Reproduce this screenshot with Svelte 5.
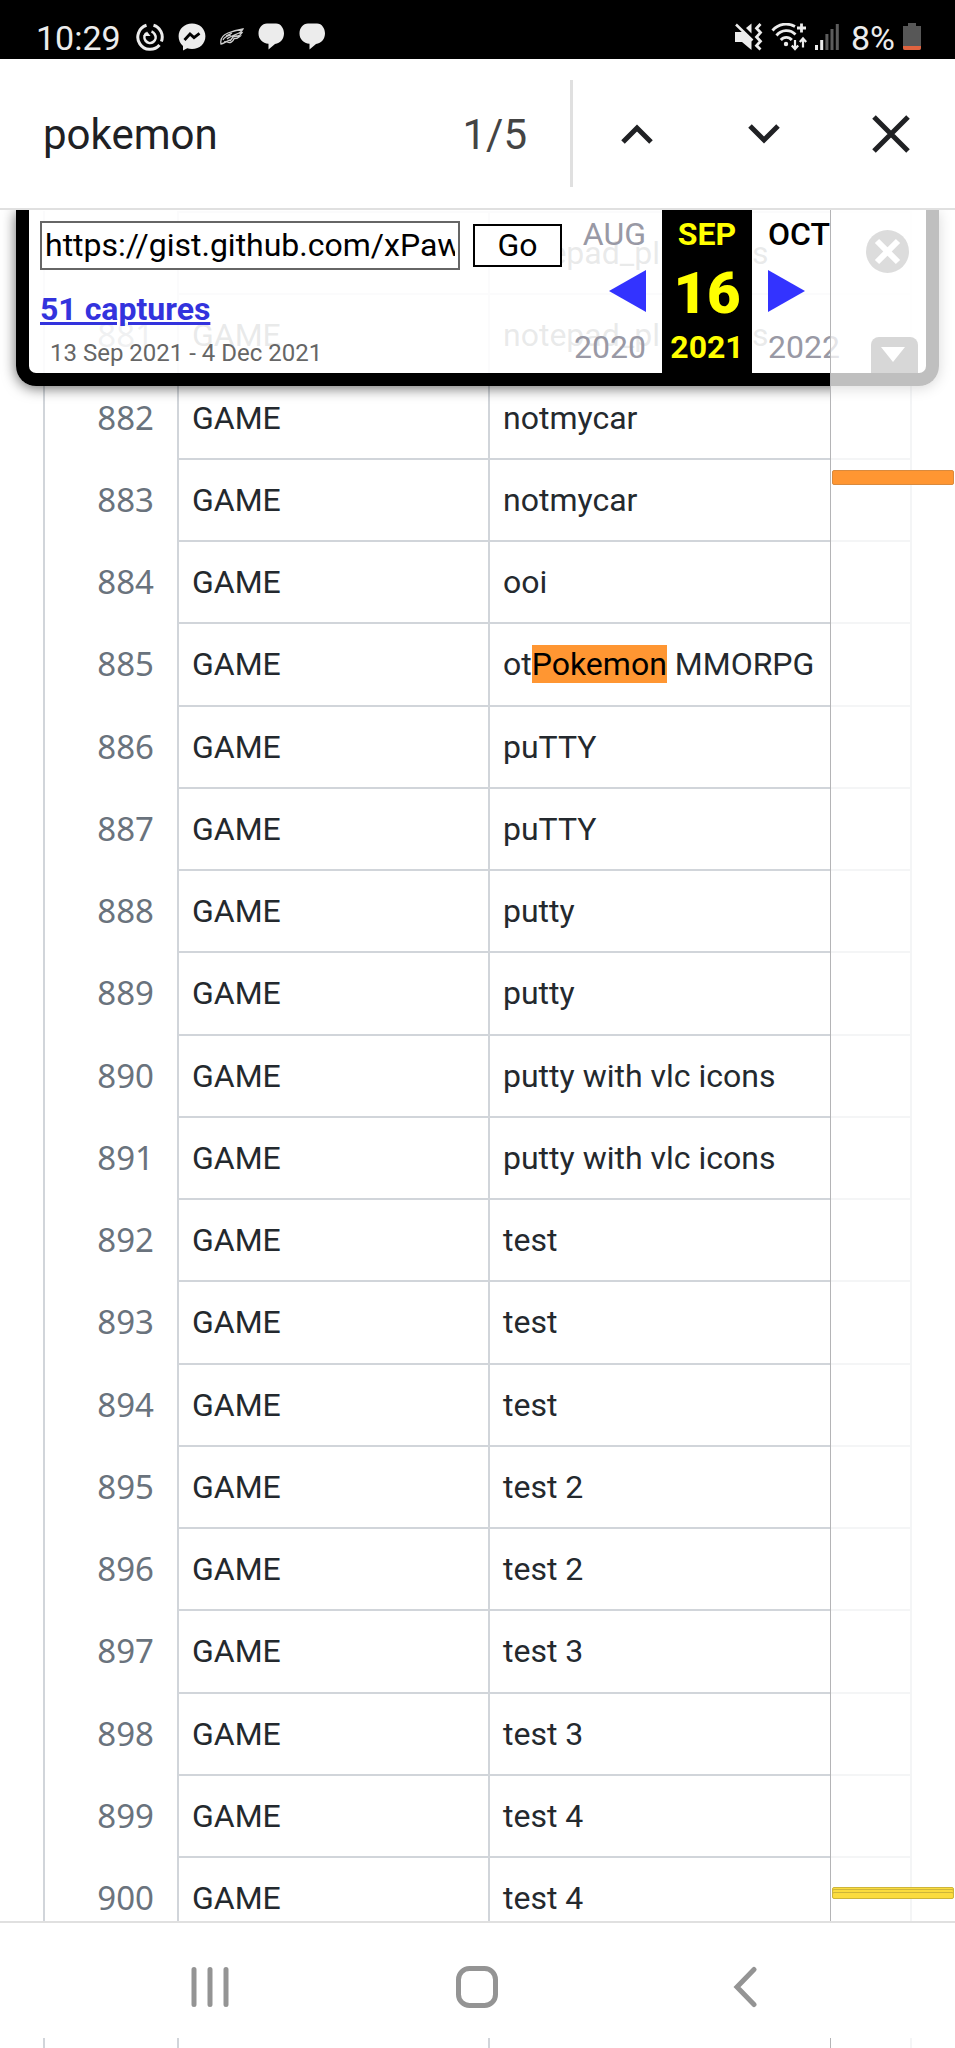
<script>
	let query = 'pokemon';
	let archiveUrl = 'https://gist.github.com/xPaw';
	let total = 5;
	let current = 1;

	const names = [
		'notepad_plus_plus',
		'notepad_plus_plus',
		'notmycar',
		'notmycar',
		'ooi',
		'otPokemon MMORPG',
		'puTTY',
		'puTTY',
		'putty',
		'putty',
		'putty with vlc icons',
		'putty with vlc icons',
		'test',
		'test',
		'test',
		'test 2',
		'test 2',
		'test 3',
		'test 3',
		'test 4',
		'test 4'
	];

	const rows = names.map((name, i) => ({ line: 880 + i, type: 'GAME', name }));

	// position of every match in the scrollbar strip
	const marks = [
		{ top: 260, height: 15, active: true },
		{ top: 1677, height: 8 },
		{ top: 1679, height: 8 },
		{ top: 1682, height: 7 }
	];

	// split a cell around the searched word
	function split(text, word) {
		const at = word ? text.toLowerCase().indexOf(word.toLowerCase()) : -1;
		if (at < 0) return [text, '', ''];
		return [text.slice(0, at), text.slice(at, at + word.length), text.slice(at + word.length)];
	}

	function previous() {
		current = current > 1 ? current - 1 : total;
	}

	function next() {
		current = current < total ? current + 1 : 1;
	}
</script>

<div class="screen">
	<header class="status">
		<time>10:29</time>
		<div class="notifications">
			<svg width="28" height="28" viewBox="0 0 28 28" fill="none" stroke="#ececec">
				<path d="M10.5 2.3A12.3 12.3 0 1 0 23.5 22M17.5 2.3A12.3 12.3 0 0 1 25.4 18.5" stroke-width="3" />
				<path d="M10.3 10.2A5.6 5.6 0 1 0 18.7 11.3A5.6 5.6 0 0 0 15.5 8.4" stroke-width="2.6" />
				<path d="M7 13l4-4.5 3.5 4.5z" fill="#ececec" stroke="none" />
			</svg>
			<svg width="28" height="28" viewBox="0 0 28 28">
				<path d="M14 .5C6.300.5.6 6 .6 13.300c0 4 1.600 7.300 4.400 9.600V27.500l4.200-2.200c1.500.4 3.100.7 4.800.7 7.700 0 13.400-5.500 13.400-12.800S21.700.5 14 .5z" fill="#ececec" />
				<path d="M6.500 17l5.500-6 4 3.600 5.500-4.200" fill="none" stroke="#000" stroke-width="2.800" />
			</svg>
			<svg width="24" height="18" viewBox="0 0 24 18" fill="none" stroke="#cfcfcf" stroke-width="1.300">
				<path d="M1 16C0 11 3 7 8 5c5-2 9-3 15-4-1 2-2 3-4 4 1 0 2 0 3-.3-1 2-3 3-5 3.500 1 .3 2 .2 3 0-2 2-4 2.500-6 2.500-1 3-4 5-7 3-2 0-3 2-6 2.300z" />
				<path d="M3 12c2-4 5-4 8-5M7 11c3-3 8-4 12-6M4 14c3 0 4-2 7-2M12 9l5-1M6 8l6-3M10 13l3-4" />
			</svg>
			<svg width="27" height="27" viewBox="0 0 27 27">
				<path d="M9 .5h9c5 0 8 5 8 10s-3.500 10-9 10.500L10.500 26.500v-5.800C4.500 20.500.5 16 .5 10.500S4 .5 9 .5z" fill="#ececec" />
			</svg>
			<svg width="27" height="27" viewBox="0 0 27 27">
				<path d="M9 .5h9c5 0 8 5 8 10s-3.500 10-9 10.500L10.500 26.500v-5.800C4.500 20.500.5 16 .5 10.500S4 .5 9 .5z" fill="#ececec" />
			</svg>
		</div>
		<div class="system">
			<svg width="29" height="28" viewBox="0 0 29 28">
				<path d="M1 9h6.500l1.500-1.500L17.500 16v11L8 19H1z" fill="#ececec" />
				<path d="M12 5l5.500-4.500V10.500z" fill="#ececec" />
				<path d="M2 1.500l16.500 16" stroke="#ececec" stroke-width="2.500" />
				<path d="M26.500 1l-4 4.300 4 4.300-4 4.400 4 4.300-4 4.300 4 4" fill="none" stroke="#ececec" stroke-width="2.800" />
			</svg>
			<svg width="36" height="28" viewBox="0 0 36 28" fill="none" stroke="#ececec" stroke-width="2.800">
				<path d="M1.500 7.500C7.500.5 16.500-.5 24 3.500M5.500 12.500c5-6 13.500-6.500 19-1M9.800 17c3-3.600 8-3.600 11 0" />
				<circle cx="15" cy="21" r="2.200" fill="#ececec" stroke="none" />
				<path d="M26 5h9M30.500.5v9" />
				<path d="M24 17v8.500M20.800 22.500l3.200 3.500 3.200-3.500M32 24.500V16M28.800 19l3.200-3.500 3.200 3.500" stroke-width="2.200" />
			</svg>
			<svg width="24" height="28" viewBox="0 0 24 28">
				<path d="M0 22h3v5H0zM5.200 17h3v10h-3z" fill="#ececec" />
				<path d="M10.400 11h3v16h-3zM15.500 6h3v21h-3zM20.800 1h3v26h-3z" fill="#5c5c5c" />
			</svg>
			<span class="percent">8%</span>
			<svg width="18" height="28" viewBox="0 0 18 28">
				<path d="M5 0h8v3h5v22a2 2 0 0 1-2 2H2a2 2 0 0 1-2-2V3h5z" fill="#575757" />
				<path d="M0 23h18v2a2 2 0 0 1-2 2H2a2 2 0 0 1-2-2z" fill="#e0633f" />
			</svg>
		</div>
	</header>

	<form class="find" on:submit|preventDefault={next}>
		<input type="text" aria-label="Find in page" bind:value={query} />
		<output>{current}/{total}</output>
		<div class="buttons">
			<button type="button" aria-label="Previous match" on:click={previous}>
				<svg width="32" height="20" viewBox="0 0 32 20">
					<path d="M2 18L16 4l14 14" />
				</svg>
			</button>
			<button type="submit" aria-label="Next match">
				<svg width="32" height="20" viewBox="0 0 32 20">
					<path d="M2 2l14 14L30 2" />
				</svg>
			</button>
			<button type="button" aria-label="Close search" on:click={() => (query = '')}>
				<svg width="38" height="38" viewBox="0 0 38 38">
					<path d="M2 2l34 34M36 2L2 36" />
				</svg>
			</button>
		</div>
	</form>

	<main class="page">
		<table>
			<tbody>
				{#each rows as row}
					{@const parts = split(row.name, query)}
					<tr>
						<td class="line">{row.line}</td>
						<td class="type">{row.type}</td>
						<td>{parts[0]}{#if parts[1]}<mark>{parts[1]}</mark>{/if}{parts[2]}</td>
					</tr>
				{/each}
				<!-- rows still loading under the navigation bar -->
				{#each [1, 2] as n (n)}
					<tr>
						<td class="line"></td>
						<td class="type"></td>
						<td></td>
					</tr>
				{/each}
			</tbody>
		</table>

		<section class="archive">
			<div class="lookup">
				<div class="url">
					<input type="text" aria-label="Archived address" bind:value={archiveUrl} />
					<button>Go</button>
				</div>
				<a href="#captures">51 captures</a>
				<p>13 Sep 2021 - 4 Dec 2021</p>
			</div>
			<div class="month before">
				<span>AUG</span>
				<button aria-label="Previous capture">
					<svg width="37" height="42" viewBox="0 0 37 42"><path d="M37 0v42L0 21z" fill="#33f" /></svg>
				</button>
				<span>2020</span>
			</div>
			<div class="month now">
				<span>SEP</span>
				<strong>16</strong>
				<span>2021</span>
			</div>
			<div class="month after">
				<span class="available">OCT</span>
				<button aria-label="Next capture">
					<svg width="37" height="42" viewBox="0 0 37 42"><path d="M0 0v42l37-21z" fill="#33f" /></svg>
				</button>
				<span>2022</span>
			</div>
			<div class="tools">
				<button class="close" aria-label="Close toolbar">
					<svg width="43" height="43" viewBox="0 0 43 43">
						<circle cx="21.500" cy="21.500" r="21.500" fill="#747474" />
						<path d="M11 11l21 21M32 11L11 32" stroke="#fff" stroke-width="6" />
					</svg>
				</button>
				<button aria-label="Expand toolbar">
					<svg width="47" height="36" viewBox="0 0 47 36">
						<path d="M0 36V8a8 8 0 0 1 8-8h31a8 8 0 0 1 8 8v28z" fill="#5f5f5f" />
						<path d="M10 10h24L22 25z" fill="#fff" />
					</svg>
				</button>
			</div>
		</section>

		<div class="strip">
			{#each marks as mark}
				<i class:active={mark.active} style="top: {mark.top}px; height: {mark.height}px"></i>
			{/each}
		</div>

		<nav>
			<button aria-label="Recent apps">
				<svg width="42" height="42" viewBox="0 0 42 42">
					<path d="M5 3.500v35M21 3.500v35M37 3.500v35" />
				</svg>
			</button>
			<button aria-label="Home">
				<svg width="44" height="44" viewBox="0 0 44 44">
					<rect x="3.500" y="3.500" width="37" height="37" rx="11" />
				</svg>
			</button>
			<button aria-label="Back">
				<svg width="24" height="42" viewBox="0 0 24 42">
					<path d="M21 3.500L4 21l17 17.500" />
				</svg>
			</button>
		</nav>
	</main>
</div>

<style>
	:global(body) {
		margin: 0;
		background: #fff;
	}
	.screen {
		display: flex;
		flex-direction: column;
		height: 100vh;
		overflow: hidden;
		font-family: Roboto, sans-serif;
		font-size: 32px;
		line-height: 38px;
		color: #24292e;
	}
	button,
	input {
		box-sizing: border-box;
		margin: 0;
		padding: 0;
		border: none;
		background: none;
		font: inherit;
		color: inherit;
	}
	svg {
		display: block;
		flex: none;
	}

	.status {
		display: flex;
		align-items: center;
		flex: none;
		box-sizing: border-box;
		height: 59px;
		padding: 16px 34px 0 36px;
		background: #000;
		color: #ececec;
		font-size: 34px;
	}
	.notifications {
		display: flex;
		align-items: center;
		gap: 14px;
		margin-left: 15px;
		padding-bottom: 2px;
	}
	.system {
		display: flex;
		align-items: center;
		gap: 8px;
		margin-left: auto;
	}
	.system svg {
		padding-bottom: 2px;
	}
	.percent {
		margin-left: 4px;
	}

	.find {
		display: flex;
		align-items: center;
		flex: none;
		height: 149px;
		border-bottom: 2px solid #e0e0e0;
		font-size: 42px;
		line-height: 50px;
		color: #202124;
	}
	.find input {
		flex: 1;
		min-width: 0;
		padding: 2px 0 0 43px;
		outline: none;
	}
	.find output {
		padding: 2px 43px 0 42px;
		color: #444;
	}
	.find .buttons {
		display: flex;
		width: 40%;
		height: 107px;
		border-left: 3px solid #e0e0e0;
	}
	.find button {
		display: flex;
		align-items: center;
		justify-content: center;
		flex: 1;
	}
	.find path {
		fill: none;
		stroke: #202124;
		stroke-width: 5;
	}

	.page {
		position: relative;
		flex: 1;
		min-height: 0;
		overflow: hidden;
	}
	table {
		width: calc(100% - 86px);
		height: 1892px;
		margin: 1px 43px 0;
		border-collapse: separate;
		border-spacing: 0;
		border-left: 2px solid #d1d5da;
		border-right: 2px solid #d1d5da;
		table-layout: fixed;
	}
	td {
		box-sizing: border-box;
		height: 82px;
		padding: 0 0 0 13px;
		border-top: 2px solid #d1d5da;
		border-left: 2px solid #d1d5da;
		white-space: nowrap;
	}
	td.line {
		width: 132px;
		padding: 2px 23px 0 0;
		border: none;
		text-align: right;
		font-family: 'Noto Sans', sans-serif;
		font-size: 33px;
		color: #6a737d;
	}
	td.type {
		width: 311px;
	}
	mark {
		background: #ff9632;
		color: #000;
	}

	.archive {
		position: absolute;
		top: 0;
		left: 16px;
		right: 16px;
		display: flex;
		box-sizing: border-box;
		height: 176px;
		padding-left: 11px;
		border: 13px solid #000;
		border-top: none;
		border-radius: 0 0 20px 20px;
		background: rgba(255, 255, 255, 0.9);
		box-shadow: 0 2px 14px rgba(0, 0, 0, 0.6);
		color: #000;
	}
	.lookup {
		width: 522px;
		padding-top: 11px;
	}
	.url {
		display: flex;
		align-items: center;
		justify-content: space-between;
		margin-bottom: 20px;
	}
	.url input {
		width: 420px;
		height: 49px;
		padding: 0 3px 2px 3px;
		border: 2px solid #666;
		background: #fff;
	}
	.url button {
		width: 89px;
		height: 43px;
		padding-bottom: 2px;
		border: 2px solid #000;
		background: #fff;
	}
	.lookup a {
		display: block;
		width: fit-content;
		font-weight: bold;
		color: #33d;
	}
	.lookup p {
		margin: 10px 0 0 10px;
		font-size: 24px;
		line-height: 30px;
		color: #666;
	}
	.month {
		display: flex;
		flex-direction: column;
		justify-content: space-between;
		box-sizing: border-box;
		padding: 5px 0 7px;
		color: #9999a5;
	}
	.before {
		align-items: flex-end;
		width: 100px;
		padding-right: 16px;
	}
	.now {
		align-items: center;
		width: 90px;
		background: #000;
		color: #ff0;
		font-weight: bold;
	}
	.now strong {
		padding-top: 6px;
		font-size: 58px;
		line-height: 69px;
	}
	.after {
		align-items: flex-start;
		padding-left: 16px;
	}
	.available {
		font-weight: 500;
		color: #000;
	}
	.tools {
		display: flex;
		flex-direction: column;
		justify-content: space-between;
		margin-left: auto;
		padding: 20px 8px 0 0;
	}
	.close {
		margin-left: -5px;
	}

	/* white veil with the match marks, along the right edge */
	.strip {
		position: absolute;
		top: 0;
		right: 0;
		bottom: 0;
		width: 124px;
		border-left: 1px solid #b4b4b6;
		background: rgba(255, 255, 255, 0.75);
	}
	.strip i {
		position: absolute;
		left: 1px;
		right: 1px;
		box-sizing: border-box;
		border: 1px solid #cdb53a;
		border-radius: 2px;
		background: #fbdc3e;
	}
	.strip i.active {
		border-color: #d98a3e;
		background: #ff9632;
	}

	nav {
		position: absolute;
		left: 0;
		right: 0;
		bottom: 10px;
		display: flex;
		justify-content: center;
		height: 115px;
		border-top: 2px solid #e0e0e0;
		background: #fff;
	}
	nav button {
		display: flex;
		align-items: center;
		justify-content: center;
		width: 28%;
		padding-top: 12px;
	}
	nav svg {
		fill: none;
		stroke: #949494;
		stroke-width: 5;
		stroke-linecap: round;
	}
</style>
